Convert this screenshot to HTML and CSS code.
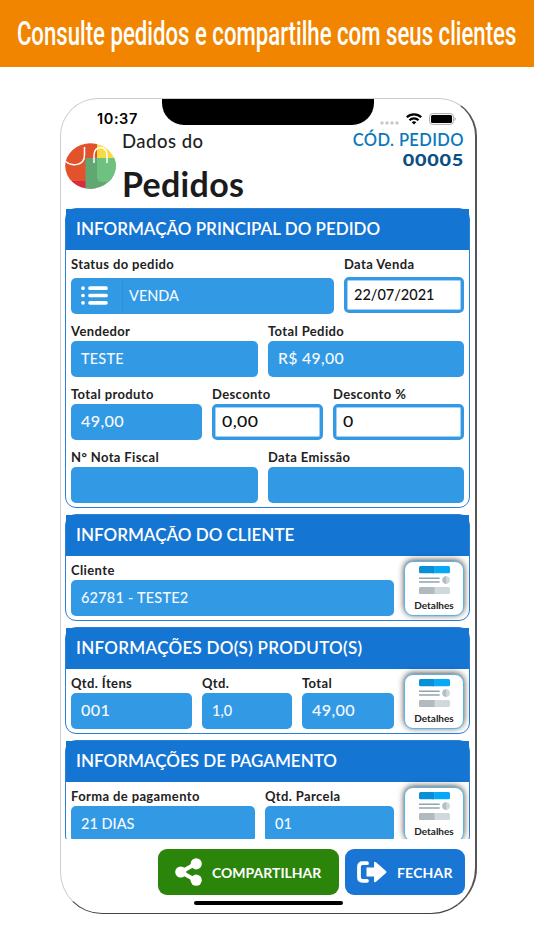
FILE: index.html
```html
<!DOCTYPE html>
<html lang="pt-BR">
<head>
    <meta charset="UTF-8">
    <title>Dados do Pedido</title>
    <meta name="viewport" content="width=device-width, initial-scale=1.0"/>
    <link rel="stylesheet" href="styles.css">
</head>

<body>
    <svg width="0" height="0" class="sprite">
        <symbol id="detalhes" viewBox="0 0 30 27">
            <rect width="15" height="7" rx="1.5" fill="#0790d8"/>
            <path d="M15 0h13.500a1.500 1.500 0 0 1 1.500 1.500v4a1.500 1.500 0 0 1-1.500 1.500H15z" fill="#05a9f8"/>
            <path d="M13 0h2v7h-2z" fill="#0790d8"/>
            <path d="M0 11.800h20M0 15.500h20" stroke="#91a4ae" stroke-width="1.400"/>
            <circle cx="26.300" cy="13.600" r="3.700" fill="#cfd8dc"/>
            <path d="M26.300 9.900a3.700 3.700 0 0 0 0 7.400z" fill="#b0bec5"/>
            <rect y="20.300" width="30" height="6.700" rx="1.500" fill="#cfd8dc"/>
            <path d="M1.500 20.300H15V27H1.500A1.500 1.500 0 0 1 0 25.500v-3.700a1.500 1.500 0 0 1 1.500-1.500z" fill="#b2babf"/>
        </symbol>
    </svg>

    <div class="banner"><h1>Consulte pedidos e compartilhe com seus clientes</h1></div>

    <div class="phone">
        <div class="status-bar">
            <span class="time">10:37</span>
            <div class="notch"></div>
            <div class="status-icons">
                <svg width="19" height="4" viewBox="0 0 19 4" fill="#c9c9c9"><circle cx="2" cy="2" r="1.700"/><circle cx="7" cy="2" r="1.700"/><circle cx="12" cy="2" r="1.700"/><circle cx="17" cy="2" r="1.700"/></svg>
                <svg class="wifi" width="16" height="12" viewBox="0 0 16 12" fill="none" stroke="#000" stroke-width="2.200"><path d="M.8 4.300a10.300 10.300 0 0 1 14.400 0M3.500 7.200a6.400 6.400 0 0 1 9 0"/><path d="M8 11.500 5.700 9.300a3.300 3.300 0 0 1 4.600 0z" fill="#000" stroke="none"/></svg>
                <svg width="27" height="12" viewBox="0 0 27 12"><rect x=".6" y=".6" width="23.800" height="10.800" rx="3" fill="#fff" stroke="#aaa"/><rect x="2" y="2" width="21" height="8" rx="1.500"/><path d="M25.500 4v4q1.300-.8 1.300-2t-1.300-2" fill="#aaa"/></svg>
            </div>
        </div>

        <div class="top">
            <svg class="logo" width="51" height="46" viewBox="0 0 51 46">
                <clipPath id="oval"><ellipse cx="25.500" cy="23" rx="25.300" ry="22.800"/></clipPath>
                <g clip-path="url(#oval)">
                    <path fill="#e2532c" d="M0 0h32v46H0z"/>
                    <path fill="#dc2942" d="M0 38h21v8H0z"/>
                    <path fill="#fada43" d="M32 0h19v15H32z"/>
                    <path fill="#60a773" d="M20.500 15H51v31H20.500z"/>
                    <path fill="#6fc180" d="M32 15h19v24H37q-5 0-5-5z"/>
                    <path d="M0 18c7 6 19.500 5 19.500-6V4M29 20v-8c0-10 13-10 13 0v8" fill="none" stroke="#fff" stroke-width="1.500"/>
                </g>
            </svg>
            <div class="title">
                <span>Dados do</span>
                <h2>Pedidos</h2>
            </div>
            <div class="code">
                <span>CÓD. PEDIDO</span>
                <b>00005</b>
            </div>
        </div>

        <div class="content">
            <section class="card">
                <h3>INFORMAÇÃO PRINCIPAL DO PEDIDO</h3>
                <div class="row first">
                    <div class="group status">
                        <label>Status do pedido</label>
                        <div class="field with-icon">
                            <span class="field-icon">
                                <svg width="27" height="19" viewBox="0 0 27 19" stroke="#fff" stroke-width="3.700" stroke-linecap="round"><path d="M2 2.200h0M2 9.500h0M2 16.800h0M9 2.200h16M9 9.500h16M9 16.800h16"/></svg>
                            </span>
                            <span>VENDA</span>
                        </div>
                    </div>
                    <div class="group date">
                        <label>Data Venda</label>
                        <div class="field open"><span>22/07/2021</span></div>
                    </div>
                </div>
                <div class="row halves">
                    <div class="group"><label>Vendedor</label><div class="field"><span class="caps">TESTE</span></div></div>
                    <div class="group"><label>Total Pedido</label><div class="field"><span class="num money">R$ 49,00</span></div></div>
                </div>
                <div class="row thirds">
                    <div class="group"><label>Total produto</label><div class="field"><span class="num">49,00</span></div></div>
                    <div class="group"><label>Desconto</label><div class="field open"><span class="num wide">0,00</span></div></div>
                    <div class="group"><label>Desconto %</label><div class="field open"><span class="num wide">0</span></div></div>
                </div>
                <div class="row halves">
                    <div class="group"><label>N° Nota Fiscal</label><div class="field"></div></div>
                    <div class="group"><label>Data Emissão</label><div class="field"></div></div>
                </div>
            </section>

            <section class="card">
                <h3>INFORMAÇÃO DO CLIENTE</h3>
                <div class="row with-button">
                    <div class="group"><label>Cliente</label><div class="field"><span class="caps">62781 - TESTE2</span></div></div>
                    <button class="details"><svg width="31" height="28"><use href="#detalhes"/></svg>Detalhes</button>
                </div>
            </section>

            <section class="card">
                <h3 class="spaced">INFORMAÇÕES DO(S) PRODUTO(S)</h3>
                <div class="row with-button products">
                    <div class="group"><label>Qtd. Ítens</label><div class="field"><span class="num">001</span></div></div>
                    <div class="group"><label>Qtd.</label><div class="field"><span>1,0</span></div></div>
                    <div class="group"><label>Total</label><div class="field"><span class="num">49,00</span></div></div>
                    <button class="details"><svg width="31" height="28"><use href="#detalhes"/></svg>Detalhes</button>
                </div>
            </section>

            <section class="card">
                <h3>INFORMAÇÕES DE PAGAMENTO</h3>
                <div class="row with-button payment">
                    <div class="group"><label>Forma de pagamento</label><div class="field"><span>21 DIAS</span></div></div>
                    <div class="group"><label>Qtd. Parcela</label><div class="field"><span>01</span></div></div>
                    <button class="details"><svg width="31" height="28"><use href="#detalhes"/></svg>Detalhes</button>
                </div>
            </section>
        </div>

        <div class="actions">
            <button class="btn share">
                <svg width="27" height="28" viewBox="0 0 27 28" fill="#fff"><path d="M21 5.500 6 14l15 8.500" fill="none" stroke="#fff" stroke-width="4"/><circle cx="5.800" cy="14" r="5.600"/><circle cx="21.200" cy="5.800" r="5.600"/><circle cx="21.200" cy="22.200" r="5.600"/></svg>
                <span>COMPARTILHAR</span>
            </button>
            <button class="btn close">
                <svg width="30" height="22" viewBox="0 0 30 22"><path d="M10 2.200H5.500q-3.500 0-3.500 3.500v10.600q0 3.500 3.500 3.500H10" fill="none" stroke="#fff" stroke-width="3.800" stroke-linecap="round"/><path d="M9.500 6.500H17V2q0-2 2-.7l10 8.700q1 1 0 2l-10 8.700q-2 1.300-2-.7v-4.500H9.500z" fill="#fff"/></svg>
                <span>FECHAR</span>
            </button>
        </div>
        <div class="home-bar"></div>
    </div>
</body>
</html>
```

FILE: styles.css
```css
* {
    box-sizing: border-box;
}

body {
    margin: 0;
    background: #fff;
    font-family: Lato, sans-serif;
    color: #222;
    height: 950px;
    overflow: hidden;
}

.sprite {
    position: absolute;
}

svg {
    flex: none;
}

.banner {
    height: 67px;
    background: #f28500;
    display: flex;
    justify-content: center;
    align-items: center;
}

.banner h1 {
    margin: 0;
    color: #fff;
    font: 500 33px/40px Roboto, sans-serif;
    white-space: nowrap;
    transform: scaleX(0.672);
}

.phone {
    width: 417px;
    height: 816px;
    margin: 31px 0 0 60px;
    border: 1px solid #ccc;
    border-right: 2px solid #555;
    border-bottom: 1px solid #444;
    border-radius: 38px 38px 46px 42px;
    overflow: hidden;
}

.status-bar {
    display: flex;
    height: 35px;
}

.time {
    width: 101px;
    padding: 11px 0 0 36px;
    font: 600 14.5px/18px Inter, sans-serif;
    letter-spacing: 0.6px;
    color: #000;
}

.notch {
    width: 212px;
    height: 26px;
    background: #000;
    border-radius: 0 0 22px 22px;
}

.status-icons {
    display: flex;
    align-items: center;
    gap: 7px;
    height: 39px;
    padding-left: 6px;
}

.status-icons svg:first-child {
    margin-top: 9px;
}

.top {
    display: flex;
    height: 74px;
    padding: 0 11px 0 4px;
}

.logo {
    margin-top: 9px;
}

.title {
    margin-left: 6px;
    flex: 1;
}

.title span {
    display: block;
    margin-top: -2px;
    font-size: 18.5px;
    line-height: 18px;
    font-weight: 500;
    letter-spacing: 0.5px;
}

.title h2 {
    margin: 14px 0 0;
    font-size: 34px;
    line-height: 40px;
    font-weight: 700;
    letter-spacing: 0.3px;
    color: #1b1b1b;
}

.code {
    display: flex;
    flex-direction: column;
    align-items: flex-end;
    line-height: 20px;
    margin-top: -4px;
    color: #0b78bd;
    font-size: 16.5px;
    font-weight: 600;
    letter-spacing: 0.4px;
}

.code b {
    color: #0c4f86;
    letter-spacing: 0.6px;
    transform: scaleX(1.2);
    transform-origin: right;
}

.content {
    height: 631px;
    overflow: hidden;
    padding: 0 5px 0 4px;
}

.card {
    border: 1px solid #2b80d8;
    border-radius: 11px;
    padding-bottom: 4.5px;
    margin-bottom: 6px;
}

.card h3 {
    margin: 0 0 5px;
    height: 41px;
    padding-left: 10px;
    background: #1575d3;
    color: #fff;
    font-size: 17px;
    line-height: 39px;
    font-weight: 600;
    white-space: nowrap;
}

.card h3.spaced {
    letter-spacing: 0.28px;
}

.row {
    display: grid;
    column-gap: 10px;
    padding: 0 5px;
    margin-bottom: 8.5px;
}

.row:last-child {
    margin-bottom: 0;
}

.first {
    grid-template-columns: 263px 1fr;
}

.halves {
    grid-template-columns: 187px 1fr;
}

.thirds {
    grid-template-columns: 131px 111px 1fr;
}

.with-button {
    grid-template-columns: 1fr 60px;
}

.products {
    grid-template-columns: 121px 90px 1fr 60px;
}

.payment {
    grid-template-columns: 184px 1fr 60px;
}

label {
    display: block;
    height: 18.5px;
    font-size: 13px;
    line-height: 18.5px;
    font-weight: 700;
    letter-spacing: 0.38px;
    white-space: nowrap;
}

.first label {
    height: 22.5px;
    line-height: 18px;
}

.first .date label {
    height: 21.5px;
}

.field {
    height: 36px;
    background: #3299e5;
    border-radius: 5px;
    display: flex;
    align-items: center;
    padding-left: 10px;
    font-size: 14.5px;
    font-weight: 500;
    color: #f5faff;
    white-space: nowrap;
}

.field.open {
    background: #fff;
    border: 3px solid #3299e5;
    padding-left: 7px;
    color: #111;
    box-shadow: inset 0 0 0 1px #a5d0f3;
}

.field.with-icon {
    padding-left: 0;
}

.field-icon {
    width: 52px;
    height: 35px;
    padding-left: 10px;
    margin-right: 6px;
    display: flex;
    align-items: center;
    border-right: 1px solid #2b8fdc;
}

.num {
    letter-spacing: 0.3px;
    transform: scaleX(1.12);
    transform-origin: left;
}

.money {
    transform: scaleX(1.09);
}

.wide {
    transform: scaleX(1.22);
}

.caps {
    letter-spacing: 0.2px;
}

.details {
    height: 54.5px;
    padding: 4px 0 0;
    display: flex;
    flex-direction: column;
    align-items: center;
    background: #fff;
    border: 1px solid #58b5e6;
    border-radius: 9px;
    box-shadow: 0 -1px 6px rgba(0, 0, 0, 0.7);
    font: 700 10px/14px Lato, sans-serif;
    color: #222;
}

.details svg {
    margin-bottom: 4px;
}

.actions {
    display: flex;
    justify-content: flex-end;
    gap: 6px;
    padding: 10px 10px 0 0;
}

.btn {
    height: 46px;
    border: 0;
    border-radius: 9px;
    display: flex;
    align-items: center;
    color: #fff;
    font: 700 14px Lato, sans-serif;
}

.share {
    width: 181px;
    background: #2b850b;
    padding: 0 0 0 17px;
    gap: 10px;
}

.close {
    width: 120px;
    background: #1976d4;
    padding: 0 0 0 12px;
    gap: 10px;
    letter-spacing: 0.2px;
}

.home-bar {
    width: 149px;
    height: 4px;
    margin: 6px 0 0 133px;
    background: #000;
    border-radius: 3px;
}
```
